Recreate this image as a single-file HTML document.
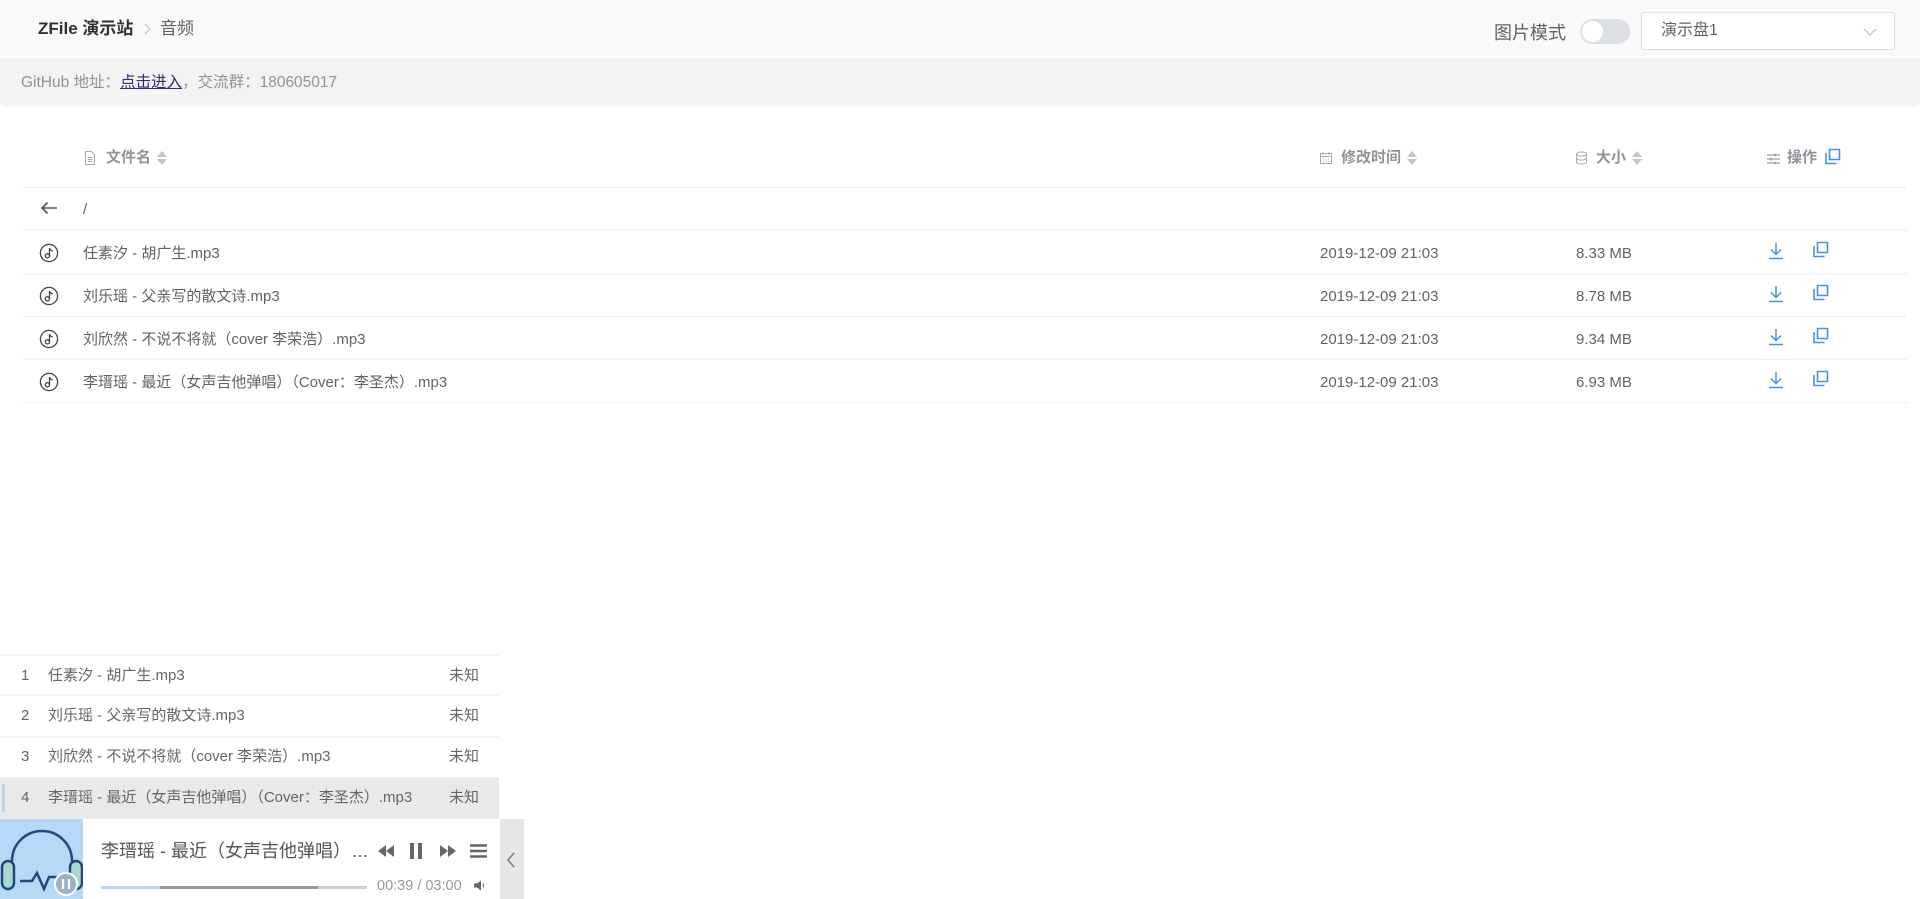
<!DOCTYPE html>
<html><head><meta charset="utf-8"><style>
*{box-sizing:border-box;margin:0;padding:0}
body{width:1920px;height:899px;overflow:hidden;background:#fff;font-family:"Liberation Sans","Noto Sans CJK SC",sans-serif;color:#606266;position:relative}
.a{position:absolute;white-space:nowrap}
.hdr{left:0;top:0;width:1920px;height:58px;background:#f9f9f9}
.notice{left:0;top:58px;width:1920px;height:47px;background:#f3f3f4;border-radius:0 0 6px 6px;box-shadow:0 1px 2px rgba(0,0,0,.06)}
.line{height:1px;background:#ebeef5;left:23px;width:1884px}
.th{font-size:15px;font-weight:bold;color:#909399;top:148px;line-height:20px}
.td{font-size:15px;color:#606266;line-height:20px}
.sort{display:inline-block;vertical-align:middle;margin-left:6px;width:10px;height:16px;position:relative}
.sort:before{content:"";position:absolute;left:0;top:1px;border:5px solid transparent;border-bottom:6px solid #c0c4cc;border-top:0}
.sort:after{content:"";position:absolute;left:0;top:9px;border:5px solid transparent;border-top:6px solid #c0c4cc;border-bottom:0}
.pl{left:0;width:499px;height:41px;border-bottom:1px solid #eee;background:#fff;font-size:15px;color:#666;line-height:40px}
</style></head><body>
<div class="a hdr"></div>
<div class="a" style="left:38px;top:18px;font-size:17px;font-weight:bold;color:#303133;line-height:22px">ZFile 演示站</div>
<svg class="a" style="left:144px;top:23px" width="7" height="12" viewBox="0 0 7 12"><path d="M1 1l5 5-5 5" fill="none" stroke="#c0c4cc" stroke-width="1.2"/></svg>
<div class="a" style="left:160px;top:18px;font-size:17px;color:#606266;line-height:22px">音频</div>
<div class="a" style="left:1494px;top:21px;font-size:18px;color:#606266;line-height:24px">图片模式</div>
<div class="a" style="left:1580px;top:19px;width:50px;height:25px;border-radius:13px;background:#dcdfe6"><div style="position:absolute;left:2px;top:2px;width:21px;height:21px;border-radius:50%;background:#fff"></div></div>
<div class="a" style="left:1641px;top:12px;width:254px;height:38px;border:1px solid #dcdfe6;border-radius:4px;background:#fff"></div>
<div class="a" style="left:1661px;top:20px;font-size:16px;color:#606266;line-height:22px">演示盘1</div>
<svg class="a" style="left:1863px;top:27px" width="14" height="10" viewBox="0 0 14 10"><path d="M1 2l6 6 6-6" fill="none" stroke="#c0c4cc" stroke-width="1.3"/></svg>
<div class="a notice"></div>
<div class="a" style="left:21px;top:74px;font-size:15.5px;color:#909399;line-height:18px">GitHub 地址：<span style="color:#3a2a6a;text-decoration:underline">点击进入</span>，交流群：180605017</div>

<svg class="a" style="left:84px;top:151px" width="12" height="14" viewBox="0 0 12 14"><path d="M1.5.5h6l3 3v10h-9z M3.5 6.5h5M3.5 8.5h5M3.5 10.5h5" fill="none" stroke="#aaa" stroke-width="1"/></svg>
<div class="a th" style="left:106px">文件名<span class="sort"></span></div>
<svg class="a" style="left:1319px;top:151px" width="14" height="14" viewBox="0 0 14 14"><path d="M1.5 2.5h11v10h-11zM1.5 5.5h11M4 1v3M10 1v3M4 8h1M6.5 8h1M9 8h1M4 10.5h1M6.5 10.5h1M9 10.5h1" fill="none" stroke="#aaa" stroke-width="1"/></svg>
<div class="a th" style="left:1341px">修改时间<span class="sort"></span></div>
<svg class="a" style="left:1575px;top:151px" width="13" height="14" viewBox="0 0 13 14"><ellipse cx="6.5" cy="3" rx="5" ry="2" fill="none" stroke="#aaa"/><path d="M1.5 3v8c0 1.1 2.2 2 5 2s5-.9 5-2V3M1.5 7c0 1.1 2.2 2 5 2s5-.9 5-2" fill="none" stroke="#aaa"/></svg>
<div class="a th" style="left:1596px">大小<span class="sort"></span></div>
<svg class="a" style="left:1767px;top:153px" width="13" height="12" viewBox="0 0 13 12"><path d="M0 2h13M0 6h13M0 10h13M8 .5v3M4 4.5v3M8 8.5v3" fill="none" stroke="#999" stroke-width="1.2"/></svg>
<div class="a th" style="left:1787px">操作</div>
<svg class="a" style="left:1824px;top:148px" width="18" height="18" viewBox="0 0 18 18"><path d="M5.5 1.5h10v10h-10z" fill="none" stroke="#4a90e2" stroke-width="1.6" stroke-linejoin="round"/><path d="M2 5v10.5h10.5" fill="none" stroke="#4a90e2" stroke-width="1.6"/></svg>
<div class="a line" style="top:187px"></div>

<svg class="a" style="left:40px;top:201px" width="18" height="14" viewBox="0 0 18 14"><path d="M17 7H2M7.5 1.5L2 7l5.5 5.5" fill="none" stroke="#555" stroke-width="1.6"/></svg>
<div class="a td" style="left:83px;top:200px">/</div>
<div class="a line" style="top:230px"></div>

<div id="rows"></div>

<div class="a pl" style="top:655px;border-top:1px solid #eee;padding-left:21px"><span style="display:inline-block;width:27px">1</span>任素汐 - 胡广生.mp3<span class="a" style="left:449px">未知</span></div>
<div class="a pl" style="top:696px;padding-left:21px"><span style="display:inline-block;width:27px">2</span>刘乐瑶 - 父亲写的散文诗.mp3<span class="a" style="left:449px">未知</span></div>
<div class="a pl" style="top:737px;padding-left:21px"><span style="display:inline-block;width:27px">3</span>刘欣然 - 不说不将就（cover 李荣浩）.mp3<span class="a" style="left:449px">未知</span></div>
<div class="a pl" style="top:778px;padding-left:21px;background:#e9e9e9"><span style="position:absolute;left:2px;top:6px;width:3px;height:28px;background:#b7d6f2"></span><span style="display:inline-block;width:27px">4</span>李瑨瑶 - 最近（女声吉他弹唱）（Cover：李圣杰）.mp3<span class="a" style="left:449px">未知</span></div>

<div class="a" style="left:0;top:819px;width:500px;height:80px;background:#fff"></div>
<div class="a" style="left:0;top:819px;width:83px;height:80px;background:#b8d8f7;overflow:hidden">
<svg width="83" height="80" viewBox="0 0 83 80"><path d="M12 60V42a30 30 0 0 1 60 0v18" fill="none" stroke="#1f4a7a" stroke-width="2.5"/><rect x="2" y="42" width="12" height="28" rx="6" fill="#a8d8cf" stroke="#1f4a7a" stroke-width="2.5"/><rect x="70" y="42" width="12" height="28" rx="6" fill="#a8d8cf" stroke="#1f4a7a" stroke-width="2.5"/><path d="M20 62h12l5-8 7 16 5-12h12" fill="none" stroke="#1f4a7a" stroke-width="2.5"/><circle cx="66" cy="65" r="11" fill="#9ab0c8" stroke="#fff" stroke-width="2"/><path d="M63 60v10M69 60v10" stroke="#fff" stroke-width="2.2"/></svg></div>
<div class="a" style="left:101px;top:839px;font-size:18px;color:#555;line-height:24px">李瑨瑶 - 最近（女声吉他弹唱）…</div>
<svg class="a" style="left:376px;top:843px" width="20" height="16" viewBox="0 0 20 16"><path d="M10 2L2 8l8 6zM18 2l-8 6 8 6z" fill="#666"/></svg>
<svg class="a" style="left:409px;top:842px" width="14" height="18" viewBox="0 0 14 18"><rect x="1" y="1" width="4" height="16" fill="#666"/><rect x="9" y="1" width="4" height="16" fill="#666"/></svg>
<svg class="a" style="left:438px;top:843px" width="20" height="16" viewBox="0 0 20 16"><path d="M2 2l8 6-8 6zM10 2l8 6-8 6z" fill="#666"/></svg>
<svg class="a" style="left:470px;top:843px" width="17" height="16" viewBox="0 0 17 16"><path d="M0 2.5h17M0 8h17M0 13.5h17" stroke="#666" stroke-width="2.4"/></svg>
<div class="a" style="left:101px;top:886px;width:266px;height:3px;background:#cdcdcd"></div>
<div class="a" style="left:160px;top:886px;width:158px;height:3px;background:#999"></div>
<div class="a" style="left:101px;top:886px;width:59px;height:3px;background:#b7d6f2"></div>
<div class="a" style="left:377px;top:877px;font-size:14.5px;color:#999;line-height:18px">00:39 / 03:00</div>
<svg class="a" style="left:474px;top:880px" width="12" height="11" viewBox="0 0 12 11"><path d="M0 3.5h3l4-3v10l-4-3H0z" fill="#666"/><path d="M9 3.5q1.5 2 0 4" fill="none" stroke="#666"/></svg>
<div class="a" style="left:500px;top:819px;width:24px;height:80px;background:#e6e6e6"></div>
<svg class="a" style="left:506px;top:852px" width="10" height="16" viewBox="0 0 10 16"><path d="M8 1L2 8l6 7" fill="none" stroke="#777" stroke-width="1.5"/></svg>

<script>
var names=["任素汐 - 胡广生.mp3","刘乐瑶 - 父亲写的散文诗.mp3","刘欣然 - 不说不将就（cover 李荣浩）.mp3","李瑨瑶 - 最近（女声吉他弹唱）（Cover：李圣杰）.mp3"];
var sizes=["8.33 MB","8.78 MB","9.34 MB","6.93 MB"];
var tops=[231,274,317,360],h="";
for(var i=0;i<4;i++){var t=tops[i];
h+='<svg class="a" style="left:39px;top:'+(t+12)+'px" width="20" height="20" viewBox="0 0 20 20"><circle cx="10" cy="10" r="8.6" fill="none" stroke="#444" stroke-width="1.3"/><path d="M10.5 5v8M10.5 5.2q1 2.3 3.3 2.8" fill="none" stroke="#444" stroke-width="1.3"/><circle cx="8.4" cy="12.8" r="2.1" fill="none" stroke="#444" stroke-width="1.3"/></svg>';
h+='<div class="a td" style="left:83px;top:'+(t+13)+'px">'+names[i]+'</div>';
h+='<div class="a td" style="left:1320px;top:'+(t+13)+'px">2019-12-09 21:03</div>';
h+='<div class="a td" style="left:1576px;top:'+(t+13)+'px">'+sizes[i]+'</div>';
h+='<svg class="a" style="left:1768px;top:'+(t+11)+'px" width="16" height="18" viewBox="0 0 16 18"><path d="M8 1v11M3 7.5l5 5 5-5M1 16.5h14" fill="none" stroke="#4a90e2" stroke-width="1.5"/></svg>';
h+='<svg class="a" style="left:1812px;top:'+(t+10)+'px" width="18" height="18" viewBox="0 0 18 18"><path d="M5.5 1.5h10v10h-10z" fill="none" stroke="#4a90e2" stroke-width="1.6" stroke-linejoin="round"/><path d="M2 5v10.5h10.5" fill="none" stroke="#4a90e2" stroke-width="1.6"/></svg>';
h+='<div class="a line" style="top:'+(t+42)+'px"></div>';}
document.getElementById("rows").outerHTML=h;
</script>
</body></html>
